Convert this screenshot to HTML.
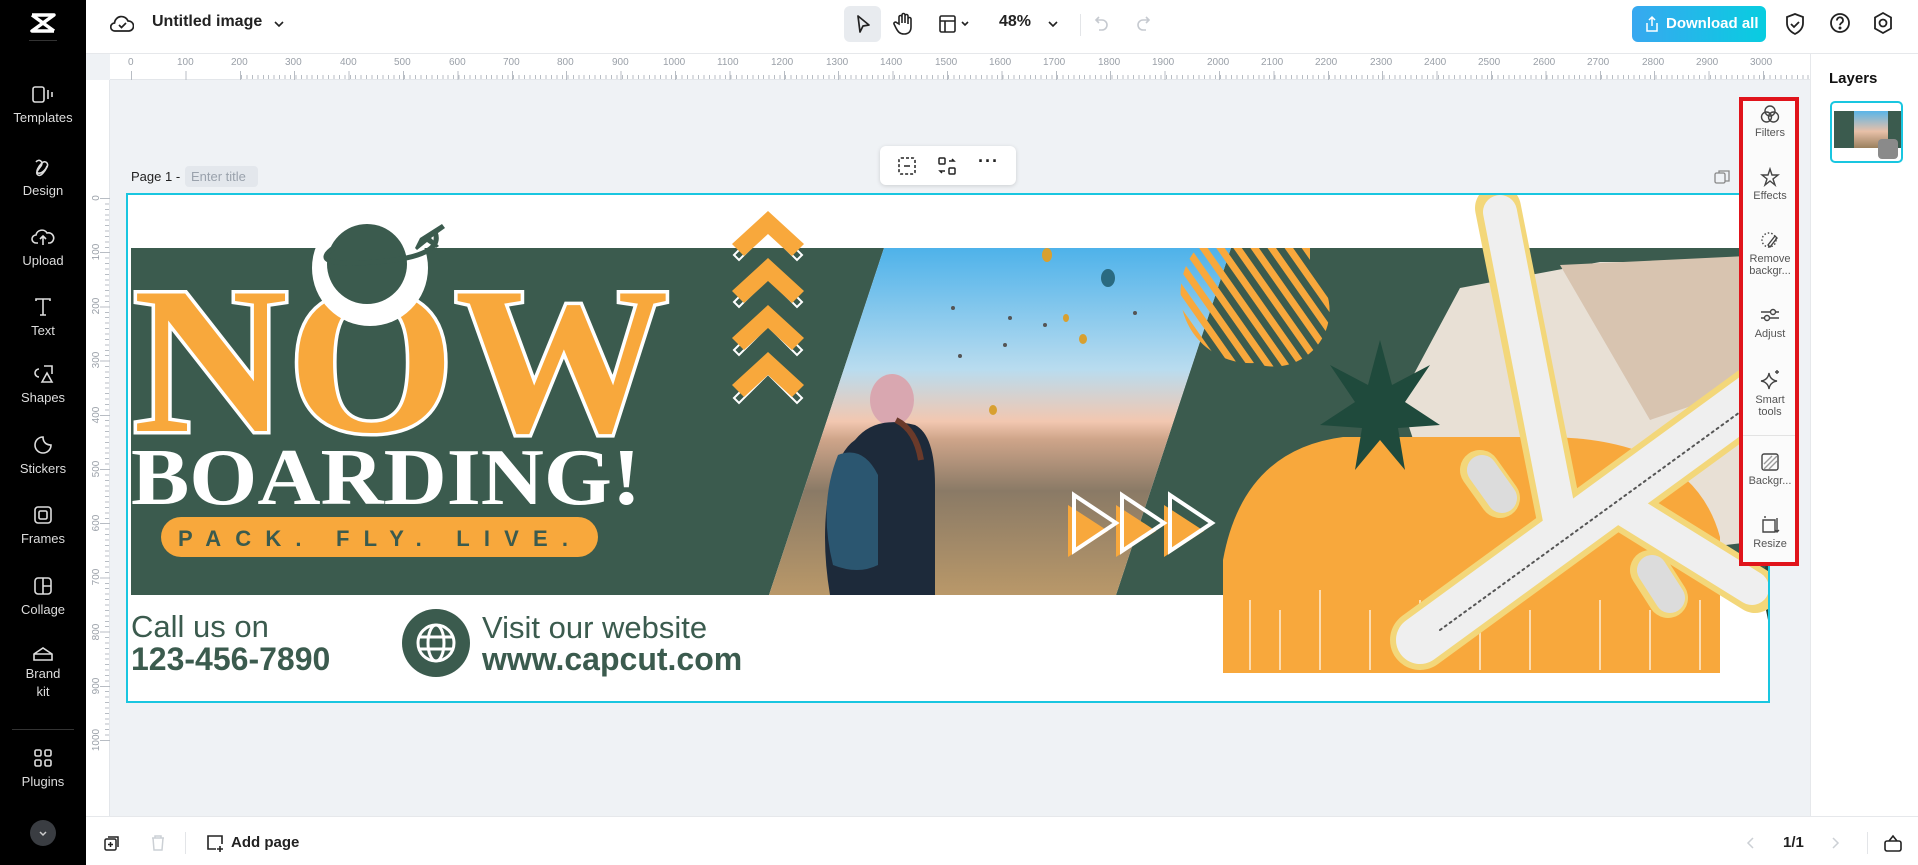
<!DOCTYPE html>
<html><head><meta charset="utf-8"><style>
*{margin:0;padding:0;box-sizing:border-box}
body{width:1918px;height:865px;overflow:hidden;background:#fff;font-family:"Liberation Sans",sans-serif;position:relative;color:#111}
.a{position:absolute}
.side{left:0;top:0;width:86px;height:865px;background:#000}
.si{position:absolute;left:0;width:86px;text-align:center;color:#ddd;font-size:13px}
.si svg{display:block;margin:0 auto 6px}
.canvas{left:86px;top:54px;width:1724px;height:762px;background:#eff2f5}
.tr{left:110px;top:54px;width:1700px;height:26px;background:#fff;border-bottom:1px solid #e3e6ea}
.vr{left:86px;top:80px;width:24px;height:736px;background:#fff;border-right:1px solid #e3e6ea}
.tool{font-size:11px;color:#555;text-align:center;width:56px;left:1742px;line-height:12px}
.tool svg{display:block;margin:0 auto 3px}
</style></head><body>
<div class="a side">
<svg class="a" style="left:29px;top:12px" width="28" height="22" viewBox="0 0 28 22"><path d="M3 3h22L3 19h22M3 3l22 16" stroke="#fff" stroke-width="3.5" fill="none" stroke-linejoin="round"/></svg>
<div class="a" style="left:29px;top:40px;width:28px;height:1px;background:#333"></div>
<div class="si" style="top:86px"><svg width="22" height="18" viewBox="0 0 22 18" fill="none" stroke="#ddd" stroke-width="1.6"><rect x="1" y="1" width="11" height="15" rx="2"/><path d="M16 4v9M20 6v5"/></svg>Templates</div>
<div class="si" style="top:157px"><svg width="20" height="20" viewBox="0 0 20 20" fill="none" stroke="#ddd" stroke-width="1.6"><path d="M3 5c3-4 8 0 5 4s-6 7-3 9 7-4 9-8-2-7-5-4-7 9-4 10 8-3 9-7"/></svg>Design</div>
<div class="si" style="top:227px"><svg width="24" height="20" viewBox="0 0 24 20" fill="none" stroke="#ddd" stroke-width="1.6"><path d="M7 16H5a4 4 0 010-8 6 6 0 0111-2 5 5 0 013 10h-2M12 10v8M9 12l3-3 3 3"/></svg>Upload</div>
<div class="si" style="top:297px"><svg width="20" height="20" viewBox="0 0 20 20" fill="none" stroke="#ddd" stroke-width="1.6"><path d="M3 4V2h14v2M10 2v16M7 18h6"/></svg>Text</div>
<div class="si" style="top:364px"><svg width="22" height="20" viewBox="0 0 22 20" fill="none" stroke="#ddd" stroke-width="1.6"><path d="M7 5a4 4 0 100 8M12 2h8v8M10 18l5-9 5 9z"/></svg>Shapes</div>
<div class="si" style="top:435px"><svg width="20" height="20" viewBox="0 0 20 20" fill="none" stroke="#ddd" stroke-width="1.6"><path d="M18 10a8 8 0 11-8-8c0 5 3 8 8 8z"/></svg>Stickers</div>
<div class="si" style="top:505px"><svg width="20" height="20" viewBox="0 0 20 20" fill="none" stroke="#ddd" stroke-width="1.6"><rect x="2" y="2" width="16" height="16" rx="3"/><rect x="6" y="6" width="8" height="8" rx="1.5"/></svg>Frames</div>
<div class="si" style="top:576px"><svg width="20" height="20" viewBox="0 0 20 20" fill="none" stroke="#ddd" stroke-width="1.6"><rect x="2" y="2" width="16" height="16" rx="3"/><path d="M10 2v16M10 10h8"/></svg>Collage</div>
<div class="si" style="top:645px;line-height:18px"><svg width="22" height="18" viewBox="0 0 22 18" fill="none" stroke="#ddd" stroke-width="1.6" style="margin-bottom:2px"><path d="M2 15h18V9L11 3 2 9z M2 9h18"/></svg>Brand<br>kit</div>
<div class="a" style="left:12px;top:729px;width:62px;height:1px;background:#333"></div>
<div class="si" style="top:748px"><svg width="20" height="20" viewBox="0 0 20 20" fill="none" stroke="#ddd" stroke-width="1.6"><rect x="2" y="2" width="6" height="6" rx="1.5"/><rect x="12" y="2" width="6" height="6" rx="1.5"/><rect x="2" y="12" width="6" height="6" rx="1.5"/><rect x="12" y="12" width="6" height="6" rx="1.5"/></svg>Plugins</div>
<div class="a" style="left:30px;top:820px;width:26px;height:26px;border-radius:50%;background:#3a3d42"><svg width="26" height="26" viewBox="0 0 26 26"><path d="M10 12l3 3 3-3" stroke="#ccc" stroke-width="1.5" fill="none"/></svg></div>
</div>
<div class="a" style="left:86px;top:405px;width:6px;height:52px;background:#111;border-radius:0 6px 6px 0"></div>

<div class="a" style="left:86px;top:53px;width:1832px;height:1px;background:#e6e8eb"></div>
<svg class="a" style="left:110px;top:14px" width="24" height="20" viewBox="0 0 24 20" fill="none" stroke="#222" stroke-width="1.7"><path d="M6 17H5a4 4 0 01-.5-8A7 7 0 0118 7a5 5 0 011 10z"/><path d="M9 11l2.5 2.5L16 9"/></svg>
<div class="a" style="left:152px;top:13px;font-size:16px;font-weight:bold;color:#222">Untitled image</div>
<svg class="a" style="left:272px;top:17px" width="14" height="14"><path d="M3 5l4 4 4-4" stroke="#222" stroke-width="1.6" fill="none"/></svg>
<div class="a" style="left:844px;top:6px;width:37px;height:36px;background:#e8ebef;border-radius:6px"></div>
<svg class="a" style="left:854px;top:14px" width="18" height="20" viewBox="0 0 18 20"><path d="M4 2l11 9-6 1-3 6z" stroke="#222" stroke-width="1.7" fill="none" stroke-linejoin="round"/></svg>
<svg class="a" style="left:893px;top:12px" width="20" height="24" viewBox="0 0 20 24" fill="none" stroke="#222" stroke-width="1.6"><path d="M6 12V5a1.5 1.5 0 013 0v6V3a1.5 1.5 0 013 0v8V4a1.5 1.5 0 013 0v8-5a1.5 1.5 0 013 0v8c0 5-3 7-7 7s-6-2-8-6l-2-4a1.5 1.5 0 012.5-1.5z"/></svg>
<svg class="a" style="left:938px;top:14px" width="36" height="20" viewBox="0 0 36 20" fill="none" stroke="#222" stroke-width="1.6"><rect x="2" y="2" width="15" height="16" rx="1.5"/><path d="M2 7h15M7 7v11M24 8l3 3 3-3"/></svg>
<div class="a" style="left:999px;top:13px;font-size:16px;font-weight:bold;color:#222">48%</div>
<svg class="a" style="left:1046px;top:17px" width="14" height="14"><path d="M3 5l4 4 4-4" stroke="#222" stroke-width="1.6" fill="none"/></svg>
<div class="a" style="left:1080px;top:14px;width:1px;height:22px;background:#e3e5e8"></div>
<svg class="a" style="left:1094px;top:14px" width="16" height="20" viewBox="0 0 16 20" fill="none" stroke="#c6cad0" stroke-width="1.6"><path d="M5 3L2 6l3 3M2 6h6a5 5 0 010 10H5"/></svg>
<svg class="a" style="left:1135px;top:14px" width="16" height="20" viewBox="0 0 16 20" fill="none" stroke="#c6cad0" stroke-width="1.6"><path d="M11 3l3 3-3 3M14 6H8a5 5 0 000 10h3"/></svg>
<div class="a" style="left:1632px;top:6px;width:134px;height:36px;border-radius:6px;background:linear-gradient(90deg,#38a8f0,#08cde0);color:#fff;font-size:15px;font-weight:bold;line-height:36px;padding-left:34px">Download all</div>
<svg class="a" style="left:1644px;top:15px" width="16" height="18" viewBox="0 0 16 18" fill="none" stroke="#fff" stroke-width="1.5"><path d="M8 11V2M5 5l3-3 3 3M3 8v8h10V8"/></svg>
<svg class="a" style="left:1784px;top:12px" width="22" height="24" viewBox="0 0 22 24" fill="none" stroke="#222" stroke-width="1.8"><path d="M11 2l8 3v6c0 6-4 9-8 11-4-2-8-5-8-11V5z"/><path d="M7 12l3 3 5-5"/></svg>
<svg class="a" style="left:1829px;top:12px" width="22" height="22" viewBox="0 0 22 22" fill="none" stroke="#222" stroke-width="1.8"><circle cx="11" cy="11" r="9"/><path d="M8 8.5a3 3 0 115 2c-1 .8-2 1.3-2 2.8"/><circle cx="11" cy="16" r=".6" fill="#222"/></svg>
<svg class="a" style="left:1872px;top:11px" width="22" height="24" viewBox="0 0 22 24" fill="none" stroke="#222" stroke-width="1.8"><path d="M11 2l8 4.5v11L11 22l-8-4.5v-11z"/><circle cx="11" cy="12" r="3.5"/></svg>

<div class="a canvas"></div>
<div class="a tr" style="background:#fff repeating-linear-gradient(90deg,#b8bdc4 0 1px,transparent 1px 5.44px) 131px 21px/100% 4px no-repeat"></div>
<div class="a" style="left:110px;top:54px;width:1700px;height:26px;background:repeating-linear-gradient(90deg,#b8bdc4 0 1px,transparent 1px 54.4px) 21px 17px/100% 9px no-repeat"></div>
<div class="a" style="left:110px;top:57px;width:1700px;height:14px;font-size:10px;color:#9aa0a8;white-space:nowrap">
<span class="a" style="left:18px">0</span><span class="a" style="left:67px">100</span><span class="a" style="left:121px">200</span><span class="a" style="left:175px">300</span><span class="a" style="left:230px">400</span><span class="a" style="left:284px">500</span><span class="a" style="left:339px">600</span><span class="a" style="left:393px">700</span><span class="a" style="left:447px">800</span><span class="a" style="left:502px">900</span><span class="a" style="left:553px">1000</span><span class="a" style="left:607px">1100</span><span class="a" style="left:661px">1200</span><span class="a" style="left:716px">1300</span><span class="a" style="left:770px">1400</span><span class="a" style="left:825px">1500</span><span class="a" style="left:879px">1600</span><span class="a" style="left:933px">1700</span><span class="a" style="left:988px">1800</span><span class="a" style="left:1042px">1900</span><span class="a" style="left:1097px">2000</span><span class="a" style="left:1151px">2100</span><span class="a" style="left:1205px">2200</span><span class="a" style="left:1260px">2300</span><span class="a" style="left:1314px">2400</span><span class="a" style="left:1368px">2500</span><span class="a" style="left:1423px">2600</span><span class="a" style="left:1477px">2700</span><span class="a" style="left:1532px">2800</span><span class="a" style="left:1586px">2900</span><span class="a" style="left:1640px">3000</span>
</div>
<div class="a vr" style="background:#fff repeating-linear-gradient(180deg,#b8bdc4 0 1px,transparent 1px 5.42px) 19px 118px/4px 546px no-repeat"></div>
<div class="a" style="left:86px;top:80px;width:24px;height:736px;background:repeating-linear-gradient(180deg,#b8bdc4 0 1px,transparent 1px 54.2px) 14px 118px/10px 546px no-repeat"></div>
<svg class="a" style="left:86px;top:80px" width="20" height="700" font-size="10" fill="#9aa0a8" font-family="Liberation Sans">
<g text-anchor="middle"><text transform="translate(13,118) rotate(-90)">0</text><text transform="translate(13,172) rotate(-90)">100</text><text transform="translate(13,226) rotate(-90)">200</text><text transform="translate(13,280) rotate(-90)">300</text><text transform="translate(13,335) rotate(-90)">400</text><text transform="translate(13,389) rotate(-90)">500</text><text transform="translate(13,443) rotate(-90)">600</text><text transform="translate(13,497) rotate(-90)">700</text><text transform="translate(13,552) rotate(-90)">800</text><text transform="translate(13,606) rotate(-90)">900</text><text transform="translate(13,660) rotate(-90)">1000</text></g></svg>

<div class="a" style="left:131px;top:169px;font-size:13px;color:#222">Page 1 -</div>
<div class="a" style="left:185px;top:166px;width:73px;height:21px;background:#e3e7ec;border-radius:4px;font-size:13px;color:#9aa2ac;line-height:21px;padding-left:6px">Enter title</div>
<svg class="a" style="left:1713px;top:168px" width="18" height="18" viewBox="0 0 18 18" fill="none" stroke="#888" stroke-width="1.3"><rect x="2" y="5" width="10" height="10" rx="1.5"/><path d="M6 5V3h10v10h-4"/></svg>

<div class="a" style="left:880px;top:146px;width:136px;height:39px;background:#fff;border-radius:6px;box-shadow:0 1px 4px rgba(0,0,0,.15)"></div>
<svg class="a" style="left:897px;top:156px" width="20" height="20" viewBox="0 0 20 20" fill="none" stroke="#222" stroke-width="1.5"><rect x="2" y="2" width="16" height="16" rx="2" stroke-dasharray="3 2"/><path d="M7 10h6"/></svg>
<svg class="a" style="left:937px;top:156px" width="20" height="20" viewBox="0 0 20 20" fill="none" stroke="#222" stroke-width="1.5"><rect x="2" y="2" width="6" height="6" rx="1"/><rect x="12" y="12" width="6" height="6" rx="1"/><path d="M12 5h5l-2-2M8 15H3l2 2"/></svg>
<div class="a" style="left:978px;top:151px;font-size:18px;font-weight:bold;color:#222;letter-spacing:1px">···</div>

<div class="a" style="left:126px;top:193px;width:1644px;height:510px;background:#fff;border:2px solid #19c6e0"></div>
<svg class="a" style="left:0;top:0" width="1918" height="865" viewBox="0 0 1918 865">
<defs>
<linearGradient id="sky" x1="0" y1="0" x2="0" y2="1"><stop offset="0" stop-color="#4eb2ea"/><stop offset=".35" stop-color="#b9dcef"/><stop offset=".5" stop-color="#f2c7b0"/><stop offset=".55" stop-color="#cfa58a"/><stop offset=".7" stop-color="#8a7a66"/><stop offset="1" stop-color="#b99869"/></linearGradient>
<pattern id="st" width="14" height="14" patternUnits="userSpaceOnUse" patternTransform="rotate(-35)"><rect width="7" height="14" fill="#f8a83c"/></pattern>
<clipPath id="pg"><rect x="128" y="195" width="1640" height="506"/></clipPath>
</defs>
<g clip-path="url(#pg)">
<polygon points="131,248 884,248 769,595 131,595" fill="#3b5b4e"/>
<polygon points="1231,248 1768,248 1768,595 1116,595" fill="#3b5b4e"/>
<polygon points="884,248 1231,248 1116,595 769,595" fill="url(#sky)"/>
<g fill="#d8a030"><ellipse cx="1047" cy="255" rx="5" ry="7"/><ellipse cx="993" cy="410" rx="4" ry="5"/><ellipse cx="1066" cy="318" rx="3" ry="4"/><ellipse cx="1083" cy="339" rx="4" ry="5"/></g>
<ellipse cx="1108" cy="278" rx="7" ry="9" fill="#2a6a80"/>
<g fill="#555"><circle cx="953" cy="308" r="2"/><circle cx="1010" cy="318" r="2"/><circle cx="1045" cy="325" r="2"/><circle cx="960" cy="356" r="2"/><circle cx="1005" cy="345" r="2"/><circle cx="1135" cy="313" r="2"/></g>
<ellipse cx="892" cy="400" rx="22" ry="26" fill="#d9a7b0"/>
<path d="M855 440q20-25 60-15q20 10 20 60v110H830q-10-60 0-110q10-35 25-45z" fill="#1d2a3a"/>
<path d="M838 455q25-10 40 20v90q-20 10-45 0q-15-60 5-110z" fill="#2b5670"/>
<path d="M896 420q20 10 25 40" stroke="#6b3a2a" stroke-width="6" fill="none"/>
<path d="M1197 248h113v20a56 56 0 01-56 95 70 70 0 01-57-115z" fill="url(#st)"/>
<polygon points="1460,288 1600,262 1768,262 1768,540 1600,560 1560,500 1420,460 1400,400" fill="#e8e0d5"/>
<polygon points="1560,265 1768,255 1768,380 1650,420" fill="#d8c4b0"/>
<path d="M1223 673V560q20-110 120-123h200q150 0 177 100v136z" fill="#f8a83c"/>
<g stroke="#fff" stroke-width="2" opacity=".6"><path d="M1250 600v70M1280 610v60M1320 590v80M1370 610v60M1420 600v70M1480 590v80M1530 610v60M1600 600v70M1650 610v60M1700 600v70"/></g>
<g fill="#1f4a3c" transform="translate(1380,410)"><path d="M0-70L12-25 50-45 25-8 60 15 18 18 25 60 0 30-25 60-18 18-60 15-25-8-50-45-12-25z"/></g>
<path d="M1760 580l8-20v60z" fill="#1f4a3c"/>
<!-- plane -->
<g stroke-linecap="round" stroke-linejoin="round">
<g stroke="#f3d77a" fill="#f3d77a"><path d="M1560 520L1498 208" stroke-width="46"/><path d="M1610 500L1755 590" stroke-width="46"/><path d="M1420 640L1790 370" stroke-width="60"/><path d="M1480 470l20 28" stroke-width="40"/><path d="M1650 570l18 28" stroke-width="40"/></g>
<g stroke="#efefef"><path d="M1560 520L1500 212" stroke-width="34"/><path d="M1610 500L1752 588" stroke-width="34"/><path d="M1420 640L1790 370" stroke-width="48"/><path d="M1482 470l20 28" stroke-width="30" stroke="#dcdcdc"/><path d="M1652 570l18 28" stroke-width="30" stroke="#dcdcdc"/></g>
<path d="M1440 630L1780 383" stroke="#555" stroke-width="2" stroke-dasharray="2 4"/>
</g>
<g>
<g fill="none" stroke="#fff" stroke-width="2"><path d="M734 255l34-34 34 34-5 5-29-29-29 29z"/><path d="M734 302l34-34 34 34-5 5-29-29-29 29z"/><path d="M734 350l34-34 34 34-5 5-29-29-29 29z"/><path d="M734 398l34-34 34 34-5 5-29-29-29 29z"/></g>
<g fill="#f8a83c"><path d="M732 244l36-33 36 33-12 12-24-22-24 22z"/><path d="M732 291l36-33 36 33-12 12-24-22-24 22z"/><path d="M732 338l36-33 36 33-12 12-24-22-24 22z"/><path d="M732 385l36-33 36 33-12 12-24-22-24 22z"/></g>
</g>
<g fill="#f8a83c"><path d="M1068 505l40 26-40 26z"/><path d="M1116 505l40 26-40 26z"/><path d="M1164 505l40 26-40 26z"/></g>
<g fill="none" stroke="#fff" stroke-width="4"><path d="M1074 495l42 28-42 28z"/><path d="M1122 495l42 28-42 28z"/><path d="M1170 495l42 28-42 28z"/></g>
<!-- NOW -->
<text x="133" y="431" font-family="Liberation Serif" font-weight="bold" font-size="210" fill="#f8a83c" stroke="#fff" stroke-width="7" paint-order="stroke" textLength="536" lengthAdjust="spacingAndGlyphs">NOW</text>
<!-- planet over O -->
<circle cx="370" cy="268" r="58" fill="#fff"/>
<circle cx="367" cy="264" r="40" fill="#3b5b4e"/>
<path d="M335 247q-30 20 40 15t60-30" stroke="#3b5b4e" stroke-width="5" fill="none"/>
<path d="M420 238l22-14 3 4-14 10 8 8-3 2-9-6-10 8-2-2z" fill="#3b5b4e"/>
<text x="131" y="504" font-family="Liberation Serif" font-weight="bold" font-size="80" fill="#fff" textLength="510" lengthAdjust="spacingAndGlyphs">BOARDING!</text>
<rect x="161" y="517" width="437" height="40" rx="20" fill="#f8a83c"/>
<text x="178" y="546" font-family="Liberation Sans" font-weight="bold" font-size="22" fill="#3b5b4e" textLength="390" lengthAdjust="spacing">PACK. FLY. LIVE.</text>
<text x="131" y="637" font-family="Liberation Sans" font-size="31" fill="#3b5b4e">Call us on</text>
<text x="131" y="670" font-family="Liberation Sans" font-weight="bold" font-size="32" fill="#3b5b4e">123-456-7890</text>
<circle cx="436" cy="643" r="34" fill="#3b5b4e"/>
<g fill="none" stroke="#fff" stroke-width="3"><circle cx="436" cy="643" r="18"/><ellipse cx="436" cy="643" rx="8" ry="18"/><path d="M418 637h36M418 649h36"/></g>
<text x="482" y="638" font-family="Liberation Sans" font-size="31" fill="#3b5b4e">Visit our website</text>
<text x="482" y="670" font-family="Liberation Sans" font-weight="bold" font-size="32" fill="#3b5b4e">www.capcut.com</text>
</g>
</svg>

<div class="a" style="left:1739px;top:97px;width:60px;height:469px;background:#fbfbfb;border:4px solid #e0141b"></div>
<div class="a" style="left:1743px;top:435px;width:52px;height:1px;background:#e3e3e3"></div>
<div class="a tool" style="top:104px"><svg width="20" height="20" viewBox="0 0 20 20" fill="none" stroke="#444" stroke-width="1.4"><circle cx="10" cy="7" r="5"/><circle cx="6.5" cy="13" r="5"/><circle cx="13.5" cy="13" r="5"/></svg>Filters</div>
<div class="a tool" style="top:167px"><svg width="20" height="20" viewBox="0 0 20 20" fill="none" stroke="#444" stroke-width="1.4"><path d="M10 2l2 6h6l-5 4 2 6-5-4-5 4 2-6-5-4h6z"/></svg>Effects</div>
<div class="a tool" style="top:230px"><svg width="20" height="20" viewBox="0 0 20 20" fill="none" stroke="#444" stroke-width="1.4"><circle cx="9" cy="10" r="7" stroke-dasharray="1.5 2"/><path d="M8 15l7-9 2 2-7 9z"/></svg>Remove<br>backgr...</div>
<div class="a tool" style="top:305px"><svg width="22" height="20" viewBox="0 0 22 20" fill="none" stroke="#444" stroke-width="1.4"><path d="M2 7h18M2 13h18"/><circle cx="14" cy="7" r="2.5" fill="#fbfbfb"/><circle cx="8" cy="13" r="2.5" fill="#fbfbfb"/></svg>Adjust</div>
<div class="a tool" style="top:369px"><svg width="22" height="22" viewBox="0 0 22 22" fill="none" stroke="#444" stroke-width="1.4"><path d="M10 4q1 7 8 8q-7 1-8 8q-1-7-8-8q7-1 8-8zM18 1v4M16 3h4"/></svg>Smart<br>tools</div>
<div class="a tool" style="top:452px"><svg width="20" height="20" viewBox="0 0 20 20" fill="none" stroke="#444" stroke-width="1.4"><rect x="2" y="2" width="16" height="16" rx="2"/><path d="M4 12l8-8M4 17l13-13M9 17l8-8" stroke="#999"/></svg>Backgr...</div>
<div class="a tool" style="top:515px"><svg width="20" height="20" viewBox="0 0 20 20" fill="none" stroke="#444" stroke-width="1.4"><path d="M3 5h12v12H3zM17 3v14M15 15l2 2 2-2M5 3V1"/></svg>Resize</div>

<div class="a" style="left:1810px;top:54px;width:1px;height:762px;background:#e6e8eb"></div>
<div class="a" style="left:1829px;top:70px;font-size:15px;font-weight:bold;color:#111">Layers</div>
<div class="a" style="left:1830px;top:101px;width:73px;height:62px;border:2px solid #19c6e0;border-radius:5px;overflow:hidden;background:#fff">
<div class="a" style="left:2px;top:8px;width:67px;height:37px;background:#3b5b4e"></div>
<div class="a" style="left:22px;top:8px;width:34px;height:37px;background:linear-gradient(#5ab5e8,#e8c0a8 55%,#9a805e)"></div>
<div class="a" style="left:46px;top:36px;width:20px;height:20px;background:#8a8a8a;border-radius:4px"></div>
</div>

<div class="a" style="left:86px;top:816px;width:1832px;height:1px;background:#e6e8eb"></div>
<svg class="a" style="left:103px;top:834px" width="18" height="18" viewBox="0 0 18 18" fill="none" stroke="#222" stroke-width="1.5"><rect x="2" y="5" width="11" height="11" rx="1.5"/><path d="M5 3h10v10M7.5 8v5M5 10.5h5"/></svg>
<svg class="a" style="left:149px;top:834px" width="18" height="18" viewBox="0 0 18 18" fill="none" stroke="#ccd0d5" stroke-width="1.5"><path d="M3 4h12M6 4V2h6v2M4 4l1 12h8l1-12"/></svg>
<div class="a" style="left:185px;top:832px;width:1px;height:22px;background:#e3e5e8"></div>
<svg class="a" style="left:205px;top:833px" width="20" height="20" viewBox="0 0 20 20" fill="none" stroke="#222" stroke-width="1.6"><path d="M11 16H3V3h14v8M15 13v6M12 16h6"/></svg>
<div class="a" style="left:231px;top:834px;font-size:15px;font-weight:bold;color:#222">Add page</div>
<svg class="a" style="left:1744px;top:835px" width="14" height="16"><path d="M9 3L4 8l5 5" stroke="#ccd0d5" stroke-width="1.5" fill="none"/></svg>
<div class="a" style="left:1783px;top:834px;font-size:15px;font-weight:bold;color:#222">1/1</div>
<svg class="a" style="left:1828px;top:835px" width="14" height="16"><path d="M5 3l5 5-5 5" stroke="#ccd0d5" stroke-width="1.5" fill="none"/></svg>
<div class="a" style="left:1867px;top:832px;width:1px;height:22px;background:#e3e5e8"></div>
<svg class="a" style="left:1883px;top:833px" width="20" height="20" viewBox="0 0 20 20" fill="none" stroke="#222" stroke-width="1.6"><rect x="2" y="8" width="16" height="10" rx="2"/><path d="M6 8l4-5 4 5"/></svg>
</body></html>
